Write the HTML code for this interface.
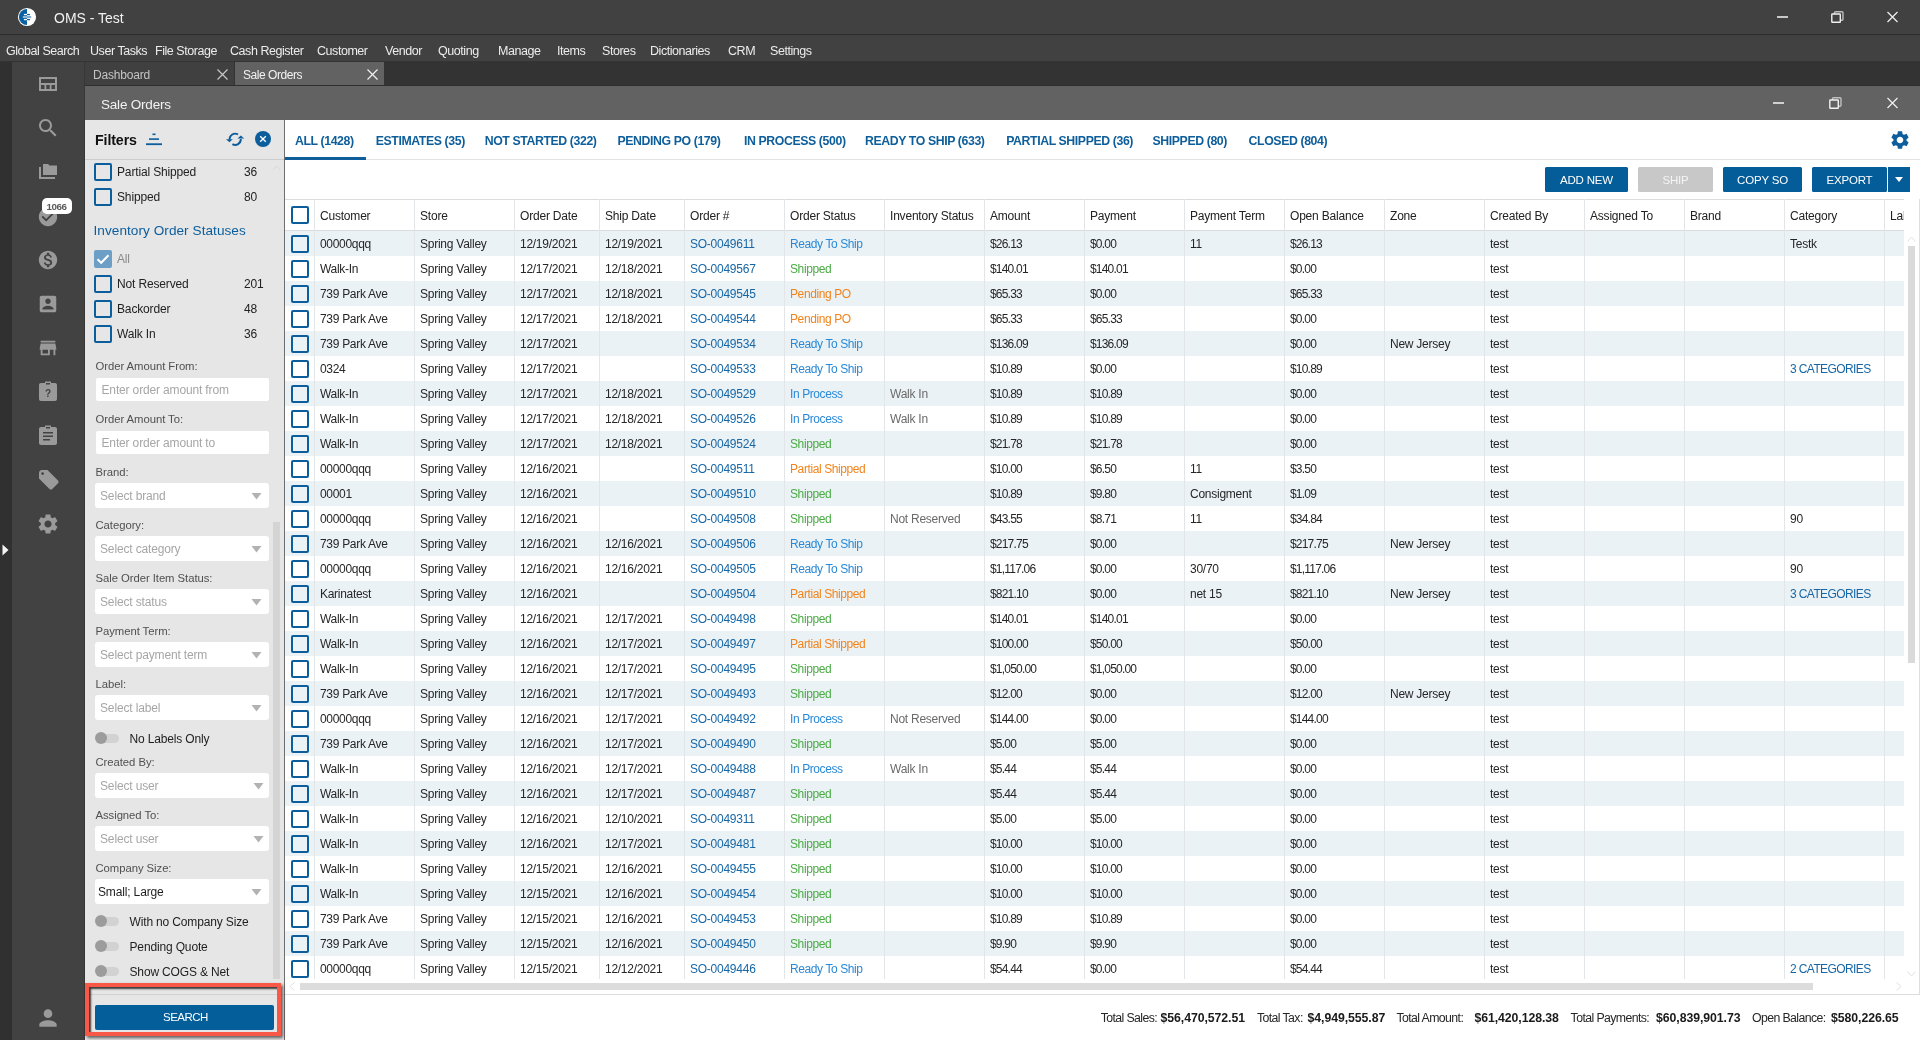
<!DOCTYPE html>
<html><head><meta charset="utf-8"><title>OMS - Test</title>
<style>
html,body{margin:0;padding:0;}
body{width:1920px;height:1040px;position:relative;overflow:hidden;background:#404040;font-family:"Liberation Sans",sans-serif;}
.r{position:absolute;box-sizing:content-box;}
.t{position:absolute;white-space:nowrap;}
.g{display:inline-block;width:11px;}
b{font-weight:bold;}
#wrap{position:absolute;left:0;top:0;width:1920px;height:1040px;overflow:hidden;will-change:transform;}
</style></head><body><div id="wrap">
<div class="r" style="left:0px;top:0px;width:1920px;height:34px;background:#414141;"></div>
<div class="r" style="left:0px;top:34px;width:1920px;height:1px;background:#2c2c2c;"></div>
<div class="r" style="left:0px;top:35px;width:1920px;height:27px;background:#414141;"></div>
<div class="r" style="left:0px;top:61px;width:1920px;height:1px;background:#343434;"></div>
<div class="r" style="left:0px;top:62px;width:12px;height:978px;background:#303030;"></div>
<div class="r" style="left:12px;top:62px;width:73px;height:978px;background:#424242;"></div>
<div class="r" style="left:84px;top:62px;width:1px;height:978px;background:#363636;"></div>
<div class="r" style="left:85px;top:62px;width:1835px;height:24px;background:#333333;"></div>
<div class="r" style="left:85px;top:62px;width:149px;height:23px;background:#404040;"></div>
<div class="r" style="left:235px;top:62px;width:149px;height:23px;background:#626262;"></div>
<div class="r" style="left:85px;top:85px;width:1835px;height:1px;background:#2e2e2e;"></div>
<div class="r" style="left:85px;top:86px;width:1835px;height:34px;background:#626262;"></div>
<div class="r" style="left:85px;top:120px;width:199px;height:920px;background:#e6e6e6;"></div>
<div class="r" style="left:284px;top:120px;width:1px;height:920px;background:#6e6e6e;"></div>
<div class="r" style="left:285px;top:120px;width:1635px;height:920px;background:#ffffff;"></div>
<svg class="r" style="left:17px;top:7px" width="20" height="20" viewBox="0 0 20 20">
<circle cx="10" cy="10" r="9.1" fill="#fff"/>
<path d="M10 1.9 A8.1 8.1 0 0 0 10 18.1 Z" fill="#0a60a0"/>
<rect x="6.9" y="6.9" width="3.1" height="1.3" fill="#fff"/><rect x="10" y="6.9" width="3" height="1.3" fill="#0a60a0"/>
<rect x="5.9" y="9.3" width="4.1" height="1.4" fill="#cfe0ec"/><rect x="10" y="9.3" width="4.2" height="1.4" fill="#4f8cbc"/>
<rect x="6.9" y="11.9" width="3.1" height="1.3" fill="#fff"/><rect x="10" y="11.9" width="3" height="1.3" fill="#0a60a0"/>
</svg>
<div class="t " style="left:54px;top:11.15px;font-size:14px;line-height:14px;color:#f2f2f2;">OMS - Test</div>
<div class="r" style="left:1777px;top:16px;width:11px;height:2px;background:#c8c8c8;"></div>
<svg class="r" style="left:1831px;top:11px" width="13" height="12" viewBox="0 0 13 12"><rect x="3.5" y="0.8" width="8.5" height="8.5" rx="1" fill="none" stroke="#bdbdbd" stroke-width="1.4"/><rect x="0.8" y="3" width="8.5" height="8.3" rx="0.5" fill="#414141" stroke="#f0f0f0" stroke-width="1.4"/></svg>
<svg class="r" style="left:1887px;top:11px" width="11" height="12" viewBox="0 0 11 12"><path d="M0.5 1 L10.5 11 M10.5 1 L0.5 11" stroke="#f0f0f0" stroke-width="1.2"/></svg>
<div class="t " style="left:6px;top:45.42px;font-size:12.5px;line-height:12.5px;color:#ececec;letter-spacing:-0.45px;">Global Search</div>
<div class="t " style="left:90px;top:45.42px;font-size:12.5px;line-height:12.5px;color:#ececec;letter-spacing:-0.45px;">User Tasks</div>
<div class="t " style="left:155px;top:45.42px;font-size:12.5px;line-height:12.5px;color:#ececec;letter-spacing:-0.45px;">File Storage</div>
<div class="t " style="left:230px;top:45.42px;font-size:12.5px;line-height:12.5px;color:#ececec;letter-spacing:-0.45px;">Cash Register</div>
<div class="t " style="left:317px;top:45.42px;font-size:12.5px;line-height:12.5px;color:#ececec;letter-spacing:-0.45px;">Customer</div>
<div class="t " style="left:385px;top:45.42px;font-size:12.5px;line-height:12.5px;color:#ececec;letter-spacing:-0.45px;">Vendor</div>
<div class="t " style="left:438px;top:45.42px;font-size:12.5px;line-height:12.5px;color:#ececec;letter-spacing:-0.45px;">Quoting</div>
<div class="t " style="left:498px;top:45.42px;font-size:12.5px;line-height:12.5px;color:#ececec;letter-spacing:-0.45px;">Manage</div>
<div class="t " style="left:557px;top:45.42px;font-size:12.5px;line-height:12.5px;color:#ececec;letter-spacing:-0.45px;">Items</div>
<div class="t " style="left:602px;top:45.42px;font-size:12.5px;line-height:12.5px;color:#ececec;letter-spacing:-0.45px;">Stores</div>
<div class="t " style="left:650px;top:45.42px;font-size:12.5px;line-height:12.5px;color:#ececec;letter-spacing:-0.45px;">Dictionaries</div>
<div class="t " style="left:728px;top:45.42px;font-size:12.5px;line-height:12.5px;color:#ececec;letter-spacing:-0.45px;">CRM</div>
<div class="t " style="left:770px;top:45.42px;font-size:12.5px;line-height:12.5px;color:#ececec;letter-spacing:-0.45px;">Settings</div>
<div class="t " style="left:93px;top:68.84px;font-size:12px;line-height:12px;color:#c4c4c4;letter-spacing:-0.2px;">Dashboard</div>
<div class="t " style="left:243px;top:68.84px;font-size:12px;line-height:12px;color:#f2f2f2;letter-spacing:-0.45px;">Sale Orders</div>
<svg class="r" style="left:217px;top:69px" width="11" height="11" viewBox="0 0 11 11"><path d="M0.5 0.5 L10.5 10.5 M10.5 0.5 L0.5 10.5" stroke="#c8c8c8" stroke-width="1.2"/></svg>
<svg class="r" style="left:367px;top:69px" width="11" height="11" viewBox="0 0 11 11"><path d="M0.5 0.5 L10.5 10.5 M10.5 0.5 L0.5 10.5" stroke="#f0f0f0" stroke-width="1.2"/></svg>
<div class="t " style="left:101px;top:97.57px;font-size:13.5px;line-height:13.5px;color:#f2f2f2;letter-spacing:-0.2px;">Sale Orders</div>
<div class="r" style="left:1773px;top:102px;width:11px;height:2px;background:#d0d0d0;"></div>
<svg class="r" style="left:1829px;top:97px" width="13" height="12" viewBox="0 0 13 12"><rect x="3.5" y="0.8" width="8.5" height="8.5" rx="1" fill="none" stroke="#c0c0c0" stroke-width="1.4"/><rect x="0.8" y="3" width="8.5" height="8.3" rx="0.5" fill="#626262" stroke="#f0f0f0" stroke-width="1.4"/></svg>
<svg class="r" style="left:1887px;top:97px" width="11" height="12" viewBox="0 0 11 12"><path d="M0.5 1 L10.5 11 M10.5 1 L0.5 11" stroke="#f0f0f0" stroke-width="1.2"/></svg>
<svg class="r" style="left:39px;top:77px" width="18" height="14" viewBox="0 0 18 14"><path d="M0 0H18V14H0Z M2 2V6H16V2Z M2 8V12H5.5V8Z M7.3 8V12H10.7V8Z M12.5 8V12H16V8Z" fill="#9a9a9a" fill-rule="evenodd"/></svg>
<svg class="r" style="left:36.0px;top:116.0px" width="24" height="24" viewBox="0 0 24 24"><path d="M15.5 14h-.79l-.28-.27C15.41 12.59 16 11.11 16 9.5 16 5.91 13.09 3 9.5 3S3 5.91 3 9.5 5.91 16 9.5 16c1.61 0 3.09-.59 4.23-1.57l.27.28v.79l5 4.99L20.49 19l-4.99-5zm-6 0C7.01 14 5 11.99 5 9.5S7.01 5 9.5 5 14 7.01 14 9.5 11.99 14 9.5 14z" fill="#9a9a9a"/></svg>
<svg class="r" style="left:39px;top:164px" width="18" height="15" viewBox="0 0 18 15"><path d="M4 0H9L10.5 1.5H18V11H4Z" fill="#9a9a9a"/><path d="M0 3H2V13H16V15H0Z" fill="#9a9a9a"/></svg>
<svg class="r" style="left:37.0px;top:206.0px" width="22" height="22" viewBox="0 0 24 24"><path d="M12 2C6.48 2 2 6.48 2 12s4.48 10 10 10 10-4.48 10-10S17.52 2 12 2zm-2 15l-5-5 1.41-1.41L10 14.17l7.59-7.59L19 8l-9 9z" fill="#9a9a9a"/></svg>
<div class="r" style="left:42px;top:198px;width:30px;height:16px;background:#fff;border-radius:5px;"></div>
<div class="t " style="left:46.5px;top:201.70px;font-size:9.8px;line-height:9.8px;color:#5a5a5a;font-weight:bold;letter-spacing:-0.45px;">1066</div>
<svg class="r" style="left:37.0px;top:249.0px" width="22" height="22" viewBox="0 0 24 24"><path d="M12 2C6.48 2 2 6.48 2 12s4.48 10 10 10 10-4.48 10-10S17.52 2 12 2zm1.41 16.09V20h-2.67v-1.93c-1.71-.36-3.160-1.46-3.27-3.4h1.96c.1 1.05.82 1.870 2.65 1.870 1.96 0 2.4-.98 2.4-1.59 0-.83-.44-1.61-2.67-2.14-2.48-.6-4.18-1.62-4.18-3.67 0-1.72 1.39-2.84 3.11-3.21V4h2.67v1.95c1.86.45 2.79 1.86 2.85 3.39H14.3c-.05-1.11-.64-1.87-2.22-1.87-1.5 0-2.4.68-2.4 1.64 0 .84.65 1.39 2.67 1.91s4.18 1.39 4.18 3.910c-.01 1.83-1.38 2.83-3.12 3.16z" fill="#9a9a9a"/></svg>
<svg class="r" style="left:37.0px;top:293.0px" width="22" height="22" viewBox="0 0 24 24"><path d="M3 5v14c0 1.1.89 2 2 2h14c1.1 0 2-.9 2-2V5c0-1.1-.9-2-2-2H5c-1.11 0-2 .9-2 2zm12 4c0 1.66-1.34 3-3 3s-3-1.34-3-3 1.34-3 3-3 3 1.34 3 3zm-9 8c0-2 4-3.1 6-3.1s6 1.1 6 3.1v1H6v-1z" fill="#9a9a9a"/></svg>
<svg class="r" style="left:37.0px;top:337.0px" width="22" height="22" viewBox="0 0 24 24"><path d="M20 4H4v2h16V4zm1 10v-2l-1-5H4l-1 5v2h1v6h10v-6h4v6h2v-6h1zm-9 4H6v-4h6v4z" fill="#9a9a9a"/></svg>
<svg class="r" style="left:39px;top:381px" width="18" height="20" viewBox="0 0 18 20"><path d="M2 2H6V0.5H12V2H16C17.1 2 18 2.9 18 4V18C18 19.1 17.1 20 16 20H2C0.9 20 0 19.1 0 18V4C0 2.9 0.9 2 2 2Z M7 3.5H11V2H7Z" fill="#9a9a9a" fill-rule="evenodd"/><text x="9" y="15.5" font-size="10" font-weight="bold" text-anchor="middle" fill="#404040" font-family="Liberation Sans">?</text></svg>
<svg class="r" style="left:39px;top:425px" width="18" height="20" viewBox="0 0 18 20"><path d="M2 2H6V0.5H12V2H16C17.1 2 18 2.9 18 4V18C18 19.1 17.1 20 16 20H2C0.9 20 0 19.1 0 18V4C0 2.9 0.9 2 2 2Z M7 3.5H11V2H7Z M4 7H14V8.6H4Z M4 10.5H14V12.1H4Z M4 14H11V15.6H4Z" fill="#9a9a9a" fill-rule="evenodd"/></svg>
<svg class="r" style="left:38px;top:469px" width="21" height="21" viewBox="0 0 21 21"><path d="M1 4C1 2.3 2.3 1 4 1H9.5L20 11.5C20.8 12.3 20.8 13.5 20 14.3L14.3 20C13.5 20.8 12.3 20.8 11.5 20L1 9.5Z" fill="#9a9a9a"/><circle cx="4.6" cy="4.6" r="1.3" fill="#404040"/></svg>
<svg class="r" style="left:36.0px;top:512.0px" width="24" height="24" viewBox="0 0 24 24"><path d="M19.14 12.94c.04-.3.06-.61.06-.94 0-.32-.02-.64-.07-.94l2.03-1.58c.18-.14.23-.41.12-.61l-1.92-3.32c-.12-.22-.37-.29-.59-.22l-2.39.96c-.5-.38-1.03-.7-1.62-.94l-.36-2.54c-.04-.24-.24-.41-.48-.41h-3.84c-.24 0-.43.17-.47.41l-.36 2.540c-.59.24-1.13.57-1.62.94l-2.39-.96c-.22-.08-.47 0-.59.22L2.74 8.87c-.12.21-.08.47.12.61l2.03 1.58c-.05.3-.09.63-.09.94s.02.64.07.94l-2.03 1.58c-.18.14-.23.41-.12.61l1.92 3.32c.12.22.37.29.59.22l2.39-.96c.5.38 1.03.7 1.62.94l.36 2.54c.05.24.24.41.48.41h3.84c.24 0 .44-.17.47-.41l.36-2.54c.59-.24 1.13-.56 1.62-.94l2.39.96c.22.08.47 0 .59-.22l1.92-3.32c.12-.22.07-.47-.12-.61l-2.01-1.58zM12 15.6c-1.98 0-3.6-1.620-3.6-3.6s1.62-3.6 3.6-3.6 3.6 1.62 3.6 3.6-1.62 3.6-3.6 3.6z" fill="#9a9a9a"/></svg>
<svg class="r" style="left:35.0px;top:1005.0px" width="26" height="26" viewBox="0 0 24 24"><path d="M12 12c2.21 0 4-1.79 4-4s-1.79-4-4-4-4 1.79-4 4 1.79 4 4 4zm0 2c-2.67 0-8 1.34-8 4v2h16v-2c0-2.66-5.33-4-8-4z" fill="#9a9a9a"/></svg>
<svg class="r" style="left:2px;top:544px" width="7" height="12" viewBox="0 0 7 12"><path d="M0.5 0.5 L6.5 6 L0.5 11.5Z" fill="#f4f4f4"/></svg>
<div class="t " style="left:95px;top:132.98px;font-size:14.2px;line-height:14.2px;color:#111;font-weight:bold;letter-spacing:-0.1px;">Filters</div>
<svg class="r" style="left:146px;top:133px" width="16" height="13" viewBox="0 0 16 13"><rect x="6.5" y="0.5" width="3" height="1.6" fill="#0b5d9c"/><rect x="3" y="5.3" width="10" height="1.6" fill="#0b5d9c"/><rect x="0" y="10.3" width="16" height="1.8" fill="#0b5d9c"/></svg>
<svg class="r" style="left:225px;top:131px" width="20" height="17" viewBox="0 0 20 17">
<path d="M13.0 3.45 A5.6 5.6 0 0 0 4.6 8.6" fill="none" stroke="#0b5d9c" stroke-width="1.9"/>
<path d="M7.4 13.15 A5.6 5.6 0 0 0 15.8 8.0" fill="none" stroke="#0b5d9c" stroke-width="1.9"/>
<path d="M1.0 8.3 L7.8 8.3 L4.4 11.3Z" fill="#0b5d9c"/>
<path d="M12.4 7.4 L19.2 7.4 L15.8 4.6Z" fill="#0b5d9c"/>
</svg>
<svg class="r" style="left:255px;top:131px" width="16" height="16" viewBox="0 0 16 16"><circle cx="8" cy="8" r="8" fill="#0b5d9c"/><path d="M5.2 5.2 L10.8 10.8 M10.8 5.2 L5.2 10.8" stroke="#fff" stroke-width="1.35"/></svg>
<div class="r" style="left:85px;top:159px;width:199px;height:1px;background:#cdcdcd;"></div>
<div class="r" style="left:94px;top:163px;width:14px;height:14px;border:2px solid #0b5d9c;border-radius:2px;background:none;"></div>
<div class="t " style="left:117px;top:165.84px;font-size:12px;line-height:12px;color:#222;letter-spacing:-0.15px;">Partial Shipped</div>
<div class="t " style="left:244px;top:165.84px;font-size:12px;line-height:12px;color:#222;letter-spacing:-0.15px;">36</div>
<div class="r" style="left:94px;top:188px;width:14px;height:14px;border:2px solid #0b5d9c;border-radius:2px;background:none;"></div>
<div class="t " style="left:117px;top:190.84px;font-size:12px;line-height:12px;color:#222;letter-spacing:-0.15px;">Shipped</div>
<div class="t " style="left:244px;top:190.84px;font-size:12px;line-height:12px;color:#222;letter-spacing:-0.15px;">80</div>
<svg class="r" style="left:272px;top:165px" width="9" height="6" viewBox="0 0 9 6"><path d="M0.5 5.5 L4.5 1 L8.5 5.5" fill="none" stroke="#d8d8d8" stroke-width="1"/></svg>
<div class="t " style="left:93.5px;top:224.29px;font-size:13.6px;line-height:13.6px;color:#0b5d9c;letter-spacing:0.05px;">Inventory Order Statuses</div>
<div class="r" style="left:94px;top:250px;width:18px;height:18px;background:#6d9fc6;border-radius:2px;"></div>
<svg class="r" style="left:94px;top:250px" width="18" height="18" viewBox="0 0 18 18"><path d="M3.5 9.2 L7.2 12.8 L14.5 5.2" fill="none" stroke="#fff" stroke-width="2"/></svg>
<div class="t " style="left:117px;top:252.84px;font-size:12px;line-height:12px;color:#8a8a8a;letter-spacing:-0.15px;">All</div>
<div class="r" style="left:94px;top:275px;width:14px;height:14px;border:2px solid #0b5d9c;border-radius:2px;background:none;"></div>
<div class="t " style="left:117px;top:277.84px;font-size:12px;line-height:12px;color:#222;letter-spacing:-0.15px;">Not Reserved</div>
<div class="t " style="left:244px;top:277.84px;font-size:12px;line-height:12px;color:#222;letter-spacing:-0.15px;">201</div>
<div class="r" style="left:94px;top:300px;width:14px;height:14px;border:2px solid #0b5d9c;border-radius:2px;background:none;"></div>
<div class="t " style="left:117px;top:302.84px;font-size:12px;line-height:12px;color:#222;letter-spacing:-0.15px;">Backorder</div>
<div class="t " style="left:244px;top:302.84px;font-size:12px;line-height:12px;color:#222;letter-spacing:-0.15px;">48</div>
<div class="r" style="left:94px;top:325px;width:14px;height:14px;border:2px solid #0b5d9c;border-radius:2px;background:none;"></div>
<div class="t " style="left:117px;top:327.84px;font-size:12px;line-height:12px;color:#222;letter-spacing:-0.15px;">Walk In</div>
<div class="t " style="left:244px;top:327.84px;font-size:12px;line-height:12px;color:#222;letter-spacing:-0.15px;">36</div>
<div class="t " style="left:95.5px;top:361.43px;font-size:11.3px;line-height:11.3px;color:#505050;letter-spacing:-0.05px;">Order Amount From:</div>
<div class="r" style="left:95.5px;top:378px;width:173px;height:23px;background:#fff;border-radius:2px;"></div>
<div class="t " style="left:101.5px;top:383.84px;font-size:12px;line-height:12px;color:#a6a6a6;letter-spacing:-0.15px;">Enter order amount from</div>
<div class="t " style="left:95.5px;top:414.43px;font-size:11.3px;line-height:11.3px;color:#505050;letter-spacing:-0.05px;">Order Amount To:</div>
<div class="r" style="left:95.5px;top:431px;width:173px;height:23px;background:#fff;border-radius:2px;"></div>
<div class="t " style="left:101.5px;top:436.84px;font-size:12px;line-height:12px;color:#a6a6a6;letter-spacing:-0.15px;">Enter order amount to</div>
<div class="t " style="left:95.5px;top:467.43px;font-size:11.3px;line-height:11.3px;color:#505050;letter-spacing:-0.05px;">Brand:</div>
<div class="r" style="left:95px;top:483px;width:174px;height:25px;background:#fff;border-radius:3px;"></div>
<div class="t " style="left:100px;top:490.34px;font-size:12px;line-height:12px;color:#a6a6a6;letter-spacing:-0.15px;">Select brand</div>
<svg class="r" style="left:251px;top:493px" width="11" height="7" viewBox="0 0 11 7"><path d="M0.5 0 H10.5 L5.5 6.5Z" fill="#b2b2b2"/></svg>
<div class="t " style="left:95.5px;top:520.43px;font-size:11.3px;line-height:11.3px;color:#505050;letter-spacing:-0.05px;">Category:</div>
<div class="r" style="left:95px;top:536px;width:174px;height:25px;background:#fff;border-radius:3px;"></div>
<div class="t " style="left:100px;top:543.34px;font-size:12px;line-height:12px;color:#a6a6a6;letter-spacing:-0.15px;">Select category</div>
<svg class="r" style="left:251px;top:546px" width="11" height="7" viewBox="0 0 11 7"><path d="M0.5 0 H10.5 L5.5 6.5Z" fill="#b2b2b2"/></svg>
<div class="t " style="left:95.5px;top:573.43px;font-size:11.3px;line-height:11.3px;color:#505050;letter-spacing:-0.05px;">Sale Order Item Status:</div>
<div class="r" style="left:95px;top:589px;width:174px;height:25px;background:#fff;border-radius:3px;"></div>
<div class="t " style="left:100px;top:596.34px;font-size:12px;line-height:12px;color:#a6a6a6;letter-spacing:-0.15px;">Select status</div>
<svg class="r" style="left:251px;top:599px" width="11" height="7" viewBox="0 0 11 7"><path d="M0.5 0 H10.5 L5.5 6.5Z" fill="#b2b2b2"/></svg>
<div class="t " style="left:95.5px;top:626.43px;font-size:11.3px;line-height:11.3px;color:#505050;letter-spacing:-0.05px;">Payment Term:</div>
<div class="r" style="left:95px;top:642px;width:174px;height:25px;background:#fff;border-radius:3px;"></div>
<div class="t " style="left:100px;top:649.34px;font-size:12px;line-height:12px;color:#a6a6a6;letter-spacing:-0.15px;">Select payment term</div>
<svg class="r" style="left:251px;top:652px" width="11" height="7" viewBox="0 0 11 7"><path d="M0.5 0 H10.5 L5.5 6.5Z" fill="#b2b2b2"/></svg>
<div class="t " style="left:95.5px;top:679.43px;font-size:11.3px;line-height:11.3px;color:#505050;letter-spacing:-0.05px;">Label:</div>
<div class="r" style="left:95px;top:695px;width:174px;height:25px;background:#fff;border-radius:3px;"></div>
<div class="t " style="left:100px;top:702.34px;font-size:12px;line-height:12px;color:#a6a6a6;letter-spacing:-0.15px;">Select label</div>
<svg class="r" style="left:251px;top:705px" width="11" height="7" viewBox="0 0 11 7"><path d="M0.5 0 H10.5 L5.5 6.5Z" fill="#b2b2b2"/></svg>
<div class="r" style="left:97px;top:734px;width:22px;height:9px;background:#d2d2d2;border-radius:4.5px;"></div>
<div class="r" style="left:95px;top:732px;width:12px;height:12px;background:#9c9c9c;border-radius:50%;"></div>
<div class="t " style="left:129.5px;top:732.84px;font-size:12px;line-height:12px;color:#1e1e1e;letter-spacing:-0.15px;">No Labels Only</div>
<div class="t " style="left:95.5px;top:757.43px;font-size:11.3px;line-height:11.3px;color:#505050;letter-spacing:-0.05px;">Created By:</div>
<div class="r" style="left:95px;top:773px;width:174px;height:25px;background:#fff;border-radius:3px;"></div>
<div class="t " style="left:100px;top:780.34px;font-size:12px;line-height:12px;color:#a6a6a6;letter-spacing:-0.15px;">Select user</div>
<svg class="r" style="left:253px;top:783px" width="11" height="7" viewBox="0 0 11 7"><path d="M0.5 0 H10.5 L5.5 6.5Z" fill="#b2b2b2"/></svg>
<div class="t " style="left:95.5px;top:810.43px;font-size:11.3px;line-height:11.3px;color:#505050;letter-spacing:-0.05px;">Assigned To:</div>
<div class="r" style="left:95px;top:826px;width:174px;height:25px;background:#fff;border-radius:3px;"></div>
<div class="t " style="left:100px;top:833.34px;font-size:12px;line-height:12px;color:#a6a6a6;letter-spacing:-0.15px;">Select user</div>
<svg class="r" style="left:253px;top:836px" width="11" height="7" viewBox="0 0 11 7"><path d="M0.5 0 H10.5 L5.5 6.5Z" fill="#b2b2b2"/></svg>
<div class="t " style="left:95.5px;top:863.43px;font-size:11.3px;line-height:11.3px;color:#505050;letter-spacing:-0.05px;">Company Size:</div>
<div class="r" style="left:95px;top:879px;width:174px;height:25px;background:#fff;border-radius:3px;"></div>
<div class="t " style="left:98px;top:886.34px;font-size:12px;line-height:12px;color:#1e1e1e;letter-spacing:-0.15px;">Small; Large</div>
<svg class="r" style="left:251px;top:889px" width="11" height="7" viewBox="0 0 11 7"><path d="M0.5 0 H10.5 L5.5 6.5Z" fill="#b2b2b2"/></svg>
<div class="r" style="left:97px;top:917px;width:22px;height:9px;background:#d2d2d2;border-radius:4.5px;"></div>
<div class="r" style="left:95px;top:915px;width:12px;height:12px;background:#9c9c9c;border-radius:50%;"></div>
<div class="t " style="left:129.5px;top:915.84px;font-size:12px;line-height:12px;color:#1e1e1e;letter-spacing:-0.15px;">With no Company Size</div>
<div class="r" style="left:97px;top:942px;width:22px;height:9px;background:#d2d2d2;border-radius:4.5px;"></div>
<div class="r" style="left:95px;top:940px;width:12px;height:12px;background:#9c9c9c;border-radius:50%;"></div>
<div class="t " style="left:129.5px;top:940.84px;font-size:12px;line-height:12px;color:#1e1e1e;letter-spacing:-0.15px;">Pending Quote</div>
<div class="r" style="left:97px;top:967px;width:22px;height:9px;background:#d2d2d2;border-radius:4.5px;"></div>
<div class="r" style="left:95px;top:965px;width:12px;height:12px;background:#9c9c9c;border-radius:50%;"></div>
<div class="t " style="left:129.5px;top:965.84px;font-size:12px;line-height:12px;color:#1e1e1e;letter-spacing:-0.15px;">Show COGS &amp; Net</div>
<div class="r" style="left:273px;top:522px;width:7px;height:457px;background:#d4d4d4;"></div>
<div class="r" style="left:85px;top:994px;width:199px;height:1px;background:#d2d2d2;"></div>
<div class="r" style="left:95px;top:1005px;width:179px;height:25px;background:#035e9a;border-radius:2px;"></div>
<div class="t " style="left:163px;top:1012.27px;font-size:11.5px;line-height:11.5px;color:#ffffff;letter-spacing:-0.5px;">SEARCH</div>
<div class="r" style="left:85px;top:983px;width:188px;height:45px;border:4px solid #fa5846;box-shadow: inset 2px 2px 2px rgba(0,0,0,0.75), 2px 2px 3px rgba(0,0,0,0.6);"></div>
<div class="t " style="left:295px;top:135.09px;font-size:12.3px;line-height:12.3px;color:#0d5e9b;font-weight:bold;letter-spacing:-0.4px;">ALL (1428)</div>
<div class="t " style="left:375.7px;top:135.09px;font-size:12.3px;line-height:12.3px;color:#0d5e9b;font-weight:bold;letter-spacing:-0.4px;">ESTIMATES (35)</div>
<div class="t " style="left:484.7px;top:135.09px;font-size:12.3px;line-height:12.3px;color:#0d5e9b;font-weight:bold;letter-spacing:-0.4px;">NOT STARTED (322)</div>
<div class="t " style="left:617.5px;top:135.09px;font-size:12.3px;line-height:12.3px;color:#0d5e9b;font-weight:bold;letter-spacing:-0.4px;">PENDING PO (179)</div>
<div class="t " style="left:744px;top:135.09px;font-size:12.3px;line-height:12.3px;color:#0d5e9b;font-weight:bold;letter-spacing:-0.4px;">IN PROCESS (500)</div>
<div class="t " style="left:865px;top:135.09px;font-size:12.3px;line-height:12.3px;color:#0d5e9b;font-weight:bold;letter-spacing:-0.4px;">READY TO SHIP (633)</div>
<div class="t " style="left:1006.2px;top:135.09px;font-size:12.3px;line-height:12.3px;color:#0d5e9b;font-weight:bold;letter-spacing:-0.4px;">PARTIAL SHIPPED (36)</div>
<div class="t " style="left:1152.5px;top:135.09px;font-size:12.3px;line-height:12.3px;color:#0d5e9b;font-weight:bold;letter-spacing:-0.4px;">SHIPPED (80)</div>
<div class="t " style="left:1248.6px;top:135.09px;font-size:12.3px;line-height:12.3px;color:#0d5e9b;font-weight:bold;letter-spacing:-0.4px;">CLOSED (804)</div>
<div class="r" style="left:285px;top:159px;width:1635px;height:1px;background:#e3e3e3;"></div>
<div class="r" style="left:285px;top:157px;width:81px;height:3px;background:#0f5e9c;"></div>
<svg class="r" style="left:1889.0px;top:128.5px" width="22" height="22" viewBox="0 0 24 24"><path d="M19.14 12.94c.04-.3.06-.61.06-.94 0-.32-.02-.64-.07-.94l2.03-1.58c.18-.14.23-.41.12-.61l-1.92-3.32c-.12-.22-.37-.29-.59-.22l-2.39.96c-.5-.38-1.03-.7-1.62-.94l-.36-2.54c-.04-.24-.24-.41-.48-.41h-3.84c-.24 0-.43.17-.47.41l-.36 2.54c-.59.24-1.13.57-1.62.94l-2.39-.96c-.22-.08-.47 0-.59.22L2.74 8.87c-.12.21-.08.47.12.61l2.03 1.58c-.05.3-.09.63-.09.94s.02.64.07.94l-2.03 1.58c-.18.14-.23.41-.12.61l1.92 3.32c.12.22.37.29.59.22l2.39-.96c.5.38 1.03.7 1.62.94l.36 2.54c.05.24.24.41.48.41h3.84c.24 0 .44-.17.47-.41l.36-2.54c.59-.24 1.13-.56 1.62-.94l2.39.96c.22.08.47 0 .59-.22l1.92-3.32c.12-.22.07-.47-.12-.61l-2.01-1.58zM12 15.6c-1.98 0-3.6-1.62-3.6-3.6s1.62-3.6 3.6-3.6 3.6 1.62 3.6 3.6-1.62 3.6-3.6 3.6z" fill="#0f5e9c"/></svg>
<div class="r" style="left:1545px;top:167px;width:83px;height:25px;background:#045c98;border-radius:1.5px;"></div>
<div class="t" style="left:1545px;top:168px;width:83px;height:25px;line-height:25px;text-align:center;font-size:11.5px;color:#fff;letter-spacing:-0.2px;">ADD NEW</div>
<div class="r" style="left:1638px;top:167px;width:75px;height:25px;background:#c8c8c8;border-radius:1.5px;"></div>
<div class="t" style="left:1638px;top:168px;width:75px;height:25px;line-height:25px;text-align:center;font-size:11.5px;color:#f4f4f4;letter-spacing:-0.2px;">SHIP</div>
<div class="r" style="left:1723px;top:167px;width:79px;height:25px;background:#045c98;border-radius:1.5px;"></div>
<div class="t" style="left:1723px;top:168px;width:79px;height:25px;line-height:25px;text-align:center;font-size:11.5px;color:#fff;letter-spacing:-0.2px;">COPY SO</div>
<div class="r" style="left:1812px;top:167px;width:75px;height:25px;background:#045c98;border-radius:1.5px;"></div>
<div class="t" style="left:1812px;top:168px;width:75px;height:25px;line-height:25px;text-align:center;font-size:11.5px;color:#fff;letter-spacing:-0.2px;">EXPORT</div>
<div class="r" style="left:1888px;top:167px;width:22px;height:25px;background:#045c98;"></div>
<svg class="r" style="left:1895px;top:177px" width="8" height="5" viewBox="0 0 8 5"><path d="M0 0H8L4 5Z" fill="#fff"/></svg>
<div class="r" style="left:285px;top:199px;width:1619px;height:781px;overflow:hidden;">
<div class="r" style="left:0px;top:0px;width:1619px;height:1px;background:#dcdcdc;"></div>
<div class="r" style="left:0px;top:31px;width:1619px;height:1px;background:#dcdcdc;"></div>
<div class="r" style="left:0px;top:32px;width:1619px;height:25px;background:#ebf2f6;"></div>
<div class="r" style="left:0px;top:82px;width:1619px;height:25px;background:#ebf2f6;"></div>
<div class="r" style="left:0px;top:132px;width:1619px;height:25px;background:#ebf2f6;"></div>
<div class="r" style="left:0px;top:182px;width:1619px;height:25px;background:#ebf2f6;"></div>
<div class="r" style="left:0px;top:232px;width:1619px;height:25px;background:#ebf2f6;"></div>
<div class="r" style="left:0px;top:282px;width:1619px;height:25px;background:#ebf2f6;"></div>
<div class="r" style="left:0px;top:332px;width:1619px;height:25px;background:#ebf2f6;"></div>
<div class="r" style="left:0px;top:382px;width:1619px;height:25px;background:#ebf2f6;"></div>
<div class="r" style="left:0px;top:432px;width:1619px;height:25px;background:#ebf2f6;"></div>
<div class="r" style="left:0px;top:482px;width:1619px;height:25px;background:#ebf2f6;"></div>
<div class="r" style="left:0px;top:532px;width:1619px;height:25px;background:#ebf2f6;"></div>
<div class="r" style="left:0px;top:582px;width:1619px;height:25px;background:#ebf2f6;"></div>
<div class="r" style="left:0px;top:632px;width:1619px;height:25px;background:#ebf2f6;"></div>
<div class="r" style="left:0px;top:682px;width:1619px;height:25px;background:#ebf2f6;"></div>
<div class="r" style="left:0px;top:732px;width:1619px;height:25px;background:#ebf2f6;"></div>
<div class="r" style="left:29px;top:0px;width:1px;height:780px;background:#e3e6e8;"></div>
<div class="r" style="left:129px;top:0px;width:1px;height:780px;background:#e3e6e8;"></div>
<div class="r" style="left:229px;top:0px;width:1px;height:780px;background:#e3e6e8;"></div>
<div class="r" style="left:314px;top:0px;width:1px;height:780px;background:#e3e6e8;"></div>
<div class="r" style="left:399px;top:0px;width:1px;height:780px;background:#e3e6e8;"></div>
<div class="r" style="left:499px;top:0px;width:1px;height:780px;background:#e3e6e8;"></div>
<div class="r" style="left:599px;top:0px;width:1px;height:780px;background:#e3e6e8;"></div>
<div class="r" style="left:699px;top:0px;width:1px;height:780px;background:#e3e6e8;"></div>
<div class="r" style="left:799px;top:0px;width:1px;height:780px;background:#e3e6e8;"></div>
<div class="r" style="left:899px;top:0px;width:1px;height:780px;background:#e3e6e8;"></div>
<div class="r" style="left:999px;top:0px;width:1px;height:780px;background:#e3e6e8;"></div>
<div class="r" style="left:1099px;top:0px;width:1px;height:780px;background:#e3e6e8;"></div>
<div class="r" style="left:1199px;top:0px;width:1px;height:780px;background:#e3e6e8;"></div>
<div class="r" style="left:1299px;top:0px;width:1px;height:780px;background:#e3e6e8;"></div>
<div class="r" style="left:1399px;top:0px;width:1px;height:780px;background:#e3e6e8;"></div>
<div class="r" style="left:1499px;top:0px;width:1px;height:780px;background:#e3e6e8;"></div>
<div class="r" style="left:1599px;top:0px;width:1px;height:780px;background:#e3e6e8;"></div>
<div class="r" style="left:6px;top:7px;width:14px;height:14px;border:2px solid #0b5d9c;border-radius:2px;background:none;"></div>
<div class="t " style="left:35px;top:10.84px;font-size:12px;line-height:12px;color:#222;letter-spacing:-0.2px;">Customer</div>
<div class="t " style="left:135px;top:10.84px;font-size:12px;line-height:12px;color:#222;letter-spacing:-0.2px;">Store</div>
<div class="t " style="left:235px;top:10.84px;font-size:12px;line-height:12px;color:#222;letter-spacing:-0.2px;">Order Date</div>
<div class="t " style="left:320px;top:10.84px;font-size:12px;line-height:12px;color:#222;letter-spacing:-0.2px;">Ship Date</div>
<div class="t " style="left:405px;top:10.84px;font-size:12px;line-height:12px;color:#222;letter-spacing:-0.2px;">Order #</div>
<div class="t " style="left:505px;top:10.84px;font-size:12px;line-height:12px;color:#222;letter-spacing:-0.2px;">Order Status</div>
<div class="t " style="left:605px;top:10.84px;font-size:12px;line-height:12px;color:#222;letter-spacing:-0.2px;">Inventory Status</div>
<div class="t " style="left:705px;top:10.84px;font-size:12px;line-height:12px;color:#222;letter-spacing:-0.2px;">Amount</div>
<div class="t " style="left:805px;top:10.84px;font-size:12px;line-height:12px;color:#222;letter-spacing:-0.2px;">Payment</div>
<div class="t " style="left:905px;top:10.84px;font-size:12px;line-height:12px;color:#222;letter-spacing:-0.2px;">Payment Term</div>
<div class="t " style="left:1005px;top:10.84px;font-size:12px;line-height:12px;color:#222;letter-spacing:-0.2px;">Open Balance</div>
<div class="t " style="left:1105px;top:10.84px;font-size:12px;line-height:12px;color:#222;letter-spacing:-0.2px;">Zone</div>
<div class="t " style="left:1205px;top:10.84px;font-size:12px;line-height:12px;color:#222;letter-spacing:-0.2px;">Created By</div>
<div class="t " style="left:1305px;top:10.84px;font-size:12px;line-height:12px;color:#222;letter-spacing:-0.2px;">Assigned To</div>
<div class="t " style="left:1405px;top:10.84px;font-size:12px;line-height:12px;color:#222;letter-spacing:-0.2px;">Brand</div>
<div class="t " style="left:1505px;top:10.84px;font-size:12px;line-height:12px;color:#222;letter-spacing:-0.2px;">Category</div>
<div class="t " style="left:1605px;top:10.84px;font-size:12px;line-height:12px;color:#222;letter-spacing:-0.2px;">Label</div>
<div class="r" style="left:6px;top:36px;width:14px;height:14px;background:none;border:2px solid #0b5d9c;border-radius:2px;"></div>
<div class="t " style="left:35px;top:38.84px;font-size:12px;line-height:12px;color:#262626;letter-spacing:-0.3px;">00000qqq</div>
<div class="t " style="left:135px;top:38.84px;font-size:12px;line-height:12px;color:#262626;letter-spacing:-0.25px;">Spring Valley</div>
<div class="t " style="left:235px;top:38.84px;font-size:12px;line-height:12px;color:#262626;letter-spacing:-0.27px;">12/19/2021</div>
<div class="t " style="left:320px;top:38.84px;font-size:12px;line-height:12px;color:#262626;letter-spacing:-0.27px;">12/19/2021</div>
<div class="t " style="left:405px;top:38.84px;font-size:12px;line-height:12px;color:#1767a6;letter-spacing:-0.25px;">SO-0049611</div>
<div class="t " style="left:505px;top:38.84px;font-size:12px;line-height:12px;color:#2a89d6;letter-spacing:-0.4px;">Ready To Ship</div>
<div class="t " style="left:705px;top:38.84px;font-size:12px;line-height:12px;color:#262626;letter-spacing:-0.8px;">$26.13</div>
<div class="t " style="left:805px;top:38.84px;font-size:12px;line-height:12px;color:#262626;letter-spacing:-0.8px;">$0.00</div>
<div class="t " style="left:905px;top:38.84px;font-size:12px;line-height:12px;color:#262626;letter-spacing:-0.25px;">11</div>
<div class="t " style="left:1005px;top:38.84px;font-size:12px;line-height:12px;color:#262626;letter-spacing:-0.8px;">$26.13</div>
<div class="t " style="left:1205px;top:38.84px;font-size:12px;line-height:12px;color:#262626;letter-spacing:-0.25px;">test</div>
<div class="t " style="left:1505px;top:38.84px;font-size:12px;line-height:12px;color:#262626;letter-spacing:-0.25px;">Testk</div>
<div class="r" style="left:6px;top:61px;width:14px;height:14px;background:none;border:2px solid #0b5d9c;border-radius:2px;"></div>
<div class="t " style="left:35px;top:63.84px;font-size:12px;line-height:12px;color:#262626;letter-spacing:-0.3px;">Walk-In</div>
<div class="t " style="left:135px;top:63.84px;font-size:12px;line-height:12px;color:#262626;letter-spacing:-0.25px;">Spring Valley</div>
<div class="t " style="left:235px;top:63.84px;font-size:12px;line-height:12px;color:#262626;letter-spacing:-0.27px;">12/17/2021</div>
<div class="t " style="left:320px;top:63.84px;font-size:12px;line-height:12px;color:#262626;letter-spacing:-0.27px;">12/18/2021</div>
<div class="t " style="left:405px;top:63.84px;font-size:12px;line-height:12px;color:#1767a6;letter-spacing:-0.25px;">SO-0049567</div>
<div class="t " style="left:505px;top:63.84px;font-size:12px;line-height:12px;color:#4bab45;letter-spacing:-0.4px;">Shipped</div>
<div class="t " style="left:705px;top:63.84px;font-size:12px;line-height:12px;color:#262626;letter-spacing:-0.8px;">$140.01</div>
<div class="t " style="left:805px;top:63.84px;font-size:12px;line-height:12px;color:#262626;letter-spacing:-0.8px;">$140.01</div>
<div class="t " style="left:1005px;top:63.84px;font-size:12px;line-height:12px;color:#262626;letter-spacing:-0.8px;">$0.00</div>
<div class="t " style="left:1205px;top:63.84px;font-size:12px;line-height:12px;color:#262626;letter-spacing:-0.25px;">test</div>
<div class="r" style="left:6px;top:86px;width:14px;height:14px;background:none;border:2px solid #0b5d9c;border-radius:2px;"></div>
<div class="t " style="left:35px;top:88.84px;font-size:12px;line-height:12px;color:#262626;letter-spacing:-0.3px;">739 Park Ave</div>
<div class="t " style="left:135px;top:88.84px;font-size:12px;line-height:12px;color:#262626;letter-spacing:-0.25px;">Spring Valley</div>
<div class="t " style="left:235px;top:88.84px;font-size:12px;line-height:12px;color:#262626;letter-spacing:-0.27px;">12/17/2021</div>
<div class="t " style="left:320px;top:88.84px;font-size:12px;line-height:12px;color:#262626;letter-spacing:-0.27px;">12/18/2021</div>
<div class="t " style="left:405px;top:88.84px;font-size:12px;line-height:12px;color:#1767a6;letter-spacing:-0.25px;">SO-0049545</div>
<div class="t " style="left:505px;top:88.84px;font-size:12px;line-height:12px;color:#f0841c;letter-spacing:-0.4px;">Pending PO</div>
<div class="t " style="left:705px;top:88.84px;font-size:12px;line-height:12px;color:#262626;letter-spacing:-0.8px;">$65.33</div>
<div class="t " style="left:805px;top:88.84px;font-size:12px;line-height:12px;color:#262626;letter-spacing:-0.8px;">$0.00</div>
<div class="t " style="left:1005px;top:88.84px;font-size:12px;line-height:12px;color:#262626;letter-spacing:-0.8px;">$65.33</div>
<div class="t " style="left:1205px;top:88.84px;font-size:12px;line-height:12px;color:#262626;letter-spacing:-0.25px;">test</div>
<div class="r" style="left:6px;top:111px;width:14px;height:14px;background:none;border:2px solid #0b5d9c;border-radius:2px;"></div>
<div class="t " style="left:35px;top:113.84px;font-size:12px;line-height:12px;color:#262626;letter-spacing:-0.3px;">739 Park Ave</div>
<div class="t " style="left:135px;top:113.84px;font-size:12px;line-height:12px;color:#262626;letter-spacing:-0.25px;">Spring Valley</div>
<div class="t " style="left:235px;top:113.84px;font-size:12px;line-height:12px;color:#262626;letter-spacing:-0.27px;">12/17/2021</div>
<div class="t " style="left:320px;top:113.84px;font-size:12px;line-height:12px;color:#262626;letter-spacing:-0.27px;">12/18/2021</div>
<div class="t " style="left:405px;top:113.84px;font-size:12px;line-height:12px;color:#1767a6;letter-spacing:-0.25px;">SO-0049544</div>
<div class="t " style="left:505px;top:113.84px;font-size:12px;line-height:12px;color:#f0841c;letter-spacing:-0.4px;">Pending PO</div>
<div class="t " style="left:705px;top:113.84px;font-size:12px;line-height:12px;color:#262626;letter-spacing:-0.8px;">$65.33</div>
<div class="t " style="left:805px;top:113.84px;font-size:12px;line-height:12px;color:#262626;letter-spacing:-0.8px;">$65.33</div>
<div class="t " style="left:1005px;top:113.84px;font-size:12px;line-height:12px;color:#262626;letter-spacing:-0.8px;">$0.00</div>
<div class="t " style="left:1205px;top:113.84px;font-size:12px;line-height:12px;color:#262626;letter-spacing:-0.25px;">test</div>
<div class="r" style="left:6px;top:136px;width:14px;height:14px;background:none;border:2px solid #0b5d9c;border-radius:2px;"></div>
<div class="t " style="left:35px;top:138.84px;font-size:12px;line-height:12px;color:#262626;letter-spacing:-0.3px;">739 Park Ave</div>
<div class="t " style="left:135px;top:138.84px;font-size:12px;line-height:12px;color:#262626;letter-spacing:-0.25px;">Spring Valley</div>
<div class="t " style="left:235px;top:138.84px;font-size:12px;line-height:12px;color:#262626;letter-spacing:-0.27px;">12/17/2021</div>
<div class="t " style="left:405px;top:138.84px;font-size:12px;line-height:12px;color:#1767a6;letter-spacing:-0.25px;">SO-0049534</div>
<div class="t " style="left:505px;top:138.84px;font-size:12px;line-height:12px;color:#2a89d6;letter-spacing:-0.4px;">Ready To Ship</div>
<div class="t " style="left:705px;top:138.84px;font-size:12px;line-height:12px;color:#262626;letter-spacing:-0.8px;">$136.09</div>
<div class="t " style="left:805px;top:138.84px;font-size:12px;line-height:12px;color:#262626;letter-spacing:-0.8px;">$136.09</div>
<div class="t " style="left:1005px;top:138.84px;font-size:12px;line-height:12px;color:#262626;letter-spacing:-0.8px;">$0.00</div>
<div class="t " style="left:1105px;top:138.84px;font-size:12px;line-height:12px;color:#262626;letter-spacing:-0.25px;">New Jersey</div>
<div class="t " style="left:1205px;top:138.84px;font-size:12px;line-height:12px;color:#262626;letter-spacing:-0.25px;">test</div>
<div class="r" style="left:6px;top:161px;width:14px;height:14px;background:none;border:2px solid #0b5d9c;border-radius:2px;"></div>
<div class="t " style="left:35px;top:163.84px;font-size:12px;line-height:12px;color:#262626;letter-spacing:-0.3px;">0324</div>
<div class="t " style="left:135px;top:163.84px;font-size:12px;line-height:12px;color:#262626;letter-spacing:-0.25px;">Spring Valley</div>
<div class="t " style="left:235px;top:163.84px;font-size:12px;line-height:12px;color:#262626;letter-spacing:-0.27px;">12/17/2021</div>
<div class="t " style="left:405px;top:163.84px;font-size:12px;line-height:12px;color:#1767a6;letter-spacing:-0.25px;">SO-0049533</div>
<div class="t " style="left:505px;top:163.84px;font-size:12px;line-height:12px;color:#2a89d6;letter-spacing:-0.4px;">Ready To Ship</div>
<div class="t " style="left:705px;top:163.84px;font-size:12px;line-height:12px;color:#262626;letter-spacing:-0.8px;">$10.89</div>
<div class="t " style="left:805px;top:163.84px;font-size:12px;line-height:12px;color:#262626;letter-spacing:-0.8px;">$0.00</div>
<div class="t " style="left:1005px;top:163.84px;font-size:12px;line-height:12px;color:#262626;letter-spacing:-0.8px;">$10.89</div>
<div class="t " style="left:1205px;top:163.84px;font-size:12px;line-height:12px;color:#262626;letter-spacing:-0.25px;">test</div>
<div class="t " style="left:1505px;top:163.84px;font-size:12px;line-height:12px;color:#1767a6;letter-spacing:-0.6px;">3 CATEGORIES</div>
<div class="r" style="left:6px;top:186px;width:14px;height:14px;background:none;border:2px solid #0b5d9c;border-radius:2px;"></div>
<div class="t " style="left:35px;top:188.84px;font-size:12px;line-height:12px;color:#262626;letter-spacing:-0.3px;">Walk-In</div>
<div class="t " style="left:135px;top:188.84px;font-size:12px;line-height:12px;color:#262626;letter-spacing:-0.25px;">Spring Valley</div>
<div class="t " style="left:235px;top:188.84px;font-size:12px;line-height:12px;color:#262626;letter-spacing:-0.27px;">12/17/2021</div>
<div class="t " style="left:320px;top:188.84px;font-size:12px;line-height:12px;color:#262626;letter-spacing:-0.27px;">12/18/2021</div>
<div class="t " style="left:405px;top:188.84px;font-size:12px;line-height:12px;color:#1767a6;letter-spacing:-0.25px;">SO-0049529</div>
<div class="t " style="left:505px;top:188.84px;font-size:12px;line-height:12px;color:#2a89d6;letter-spacing:-0.4px;">In Process</div>
<div class="t " style="left:605px;top:188.84px;font-size:12px;line-height:12px;color:#6a6a6a;letter-spacing:-0.25px;">Walk In</div>
<div class="t " style="left:705px;top:188.84px;font-size:12px;line-height:12px;color:#262626;letter-spacing:-0.8px;">$10.89</div>
<div class="t " style="left:805px;top:188.84px;font-size:12px;line-height:12px;color:#262626;letter-spacing:-0.8px;">$10.89</div>
<div class="t " style="left:1005px;top:188.84px;font-size:12px;line-height:12px;color:#262626;letter-spacing:-0.8px;">$0.00</div>
<div class="t " style="left:1205px;top:188.84px;font-size:12px;line-height:12px;color:#262626;letter-spacing:-0.25px;">test</div>
<div class="r" style="left:6px;top:211px;width:14px;height:14px;background:none;border:2px solid #0b5d9c;border-radius:2px;"></div>
<div class="t " style="left:35px;top:213.84px;font-size:12px;line-height:12px;color:#262626;letter-spacing:-0.3px;">Walk-In</div>
<div class="t " style="left:135px;top:213.84px;font-size:12px;line-height:12px;color:#262626;letter-spacing:-0.25px;">Spring Valley</div>
<div class="t " style="left:235px;top:213.84px;font-size:12px;line-height:12px;color:#262626;letter-spacing:-0.27px;">12/17/2021</div>
<div class="t " style="left:320px;top:213.84px;font-size:12px;line-height:12px;color:#262626;letter-spacing:-0.27px;">12/18/2021</div>
<div class="t " style="left:405px;top:213.84px;font-size:12px;line-height:12px;color:#1767a6;letter-spacing:-0.25px;">SO-0049526</div>
<div class="t " style="left:505px;top:213.84px;font-size:12px;line-height:12px;color:#2a89d6;letter-spacing:-0.4px;">In Process</div>
<div class="t " style="left:605px;top:213.84px;font-size:12px;line-height:12px;color:#6a6a6a;letter-spacing:-0.25px;">Walk In</div>
<div class="t " style="left:705px;top:213.84px;font-size:12px;line-height:12px;color:#262626;letter-spacing:-0.8px;">$10.89</div>
<div class="t " style="left:805px;top:213.84px;font-size:12px;line-height:12px;color:#262626;letter-spacing:-0.8px;">$10.89</div>
<div class="t " style="left:1005px;top:213.84px;font-size:12px;line-height:12px;color:#262626;letter-spacing:-0.8px;">$0.00</div>
<div class="t " style="left:1205px;top:213.84px;font-size:12px;line-height:12px;color:#262626;letter-spacing:-0.25px;">test</div>
<div class="r" style="left:6px;top:236px;width:14px;height:14px;background:none;border:2px solid #0b5d9c;border-radius:2px;"></div>
<div class="t " style="left:35px;top:238.84px;font-size:12px;line-height:12px;color:#262626;letter-spacing:-0.3px;">Walk-In</div>
<div class="t " style="left:135px;top:238.84px;font-size:12px;line-height:12px;color:#262626;letter-spacing:-0.25px;">Spring Valley</div>
<div class="t " style="left:235px;top:238.84px;font-size:12px;line-height:12px;color:#262626;letter-spacing:-0.27px;">12/17/2021</div>
<div class="t " style="left:320px;top:238.84px;font-size:12px;line-height:12px;color:#262626;letter-spacing:-0.27px;">12/18/2021</div>
<div class="t " style="left:405px;top:238.84px;font-size:12px;line-height:12px;color:#1767a6;letter-spacing:-0.25px;">SO-0049524</div>
<div class="t " style="left:505px;top:238.84px;font-size:12px;line-height:12px;color:#4bab45;letter-spacing:-0.4px;">Shipped</div>
<div class="t " style="left:705px;top:238.84px;font-size:12px;line-height:12px;color:#262626;letter-spacing:-0.8px;">$21.78</div>
<div class="t " style="left:805px;top:238.84px;font-size:12px;line-height:12px;color:#262626;letter-spacing:-0.8px;">$21.78</div>
<div class="t " style="left:1005px;top:238.84px;font-size:12px;line-height:12px;color:#262626;letter-spacing:-0.8px;">$0.00</div>
<div class="t " style="left:1205px;top:238.84px;font-size:12px;line-height:12px;color:#262626;letter-spacing:-0.25px;">test</div>
<div class="r" style="left:6px;top:261px;width:14px;height:14px;background:none;border:2px solid #0b5d9c;border-radius:2px;"></div>
<div class="t " style="left:35px;top:263.84px;font-size:12px;line-height:12px;color:#262626;letter-spacing:-0.3px;">00000qqq</div>
<div class="t " style="left:135px;top:263.84px;font-size:12px;line-height:12px;color:#262626;letter-spacing:-0.25px;">Spring Valley</div>
<div class="t " style="left:235px;top:263.84px;font-size:12px;line-height:12px;color:#262626;letter-spacing:-0.27px;">12/16/2021</div>
<div class="t " style="left:405px;top:263.84px;font-size:12px;line-height:12px;color:#1767a6;letter-spacing:-0.25px;">SO-0049511</div>
<div class="t " style="left:505px;top:263.84px;font-size:12px;line-height:12px;color:#f0841c;letter-spacing:-0.4px;">Partial Shipped</div>
<div class="t " style="left:705px;top:263.84px;font-size:12px;line-height:12px;color:#262626;letter-spacing:-0.8px;">$10.00</div>
<div class="t " style="left:805px;top:263.84px;font-size:12px;line-height:12px;color:#262626;letter-spacing:-0.8px;">$6.50</div>
<div class="t " style="left:905px;top:263.84px;font-size:12px;line-height:12px;color:#262626;letter-spacing:-0.25px;">11</div>
<div class="t " style="left:1005px;top:263.84px;font-size:12px;line-height:12px;color:#262626;letter-spacing:-0.8px;">$3.50</div>
<div class="t " style="left:1205px;top:263.84px;font-size:12px;line-height:12px;color:#262626;letter-spacing:-0.25px;">test</div>
<div class="r" style="left:6px;top:286px;width:14px;height:14px;background:none;border:2px solid #0b5d9c;border-radius:2px;"></div>
<div class="t " style="left:35px;top:288.84px;font-size:12px;line-height:12px;color:#262626;letter-spacing:-0.3px;">00001</div>
<div class="t " style="left:135px;top:288.84px;font-size:12px;line-height:12px;color:#262626;letter-spacing:-0.25px;">Spring Valley</div>
<div class="t " style="left:235px;top:288.84px;font-size:12px;line-height:12px;color:#262626;letter-spacing:-0.27px;">12/16/2021</div>
<div class="t " style="left:405px;top:288.84px;font-size:12px;line-height:12px;color:#1767a6;letter-spacing:-0.25px;">SO-0049510</div>
<div class="t " style="left:505px;top:288.84px;font-size:12px;line-height:12px;color:#4bab45;letter-spacing:-0.4px;">Shipped</div>
<div class="t " style="left:705px;top:288.84px;font-size:12px;line-height:12px;color:#262626;letter-spacing:-0.8px;">$10.89</div>
<div class="t " style="left:805px;top:288.84px;font-size:12px;line-height:12px;color:#262626;letter-spacing:-0.8px;">$9.80</div>
<div class="t " style="left:905px;top:288.84px;font-size:12px;line-height:12px;color:#262626;letter-spacing:-0.25px;">Consigment</div>
<div class="t " style="left:1005px;top:288.84px;font-size:12px;line-height:12px;color:#262626;letter-spacing:-0.8px;">$1.09</div>
<div class="t " style="left:1205px;top:288.84px;font-size:12px;line-height:12px;color:#262626;letter-spacing:-0.25px;">test</div>
<div class="r" style="left:6px;top:311px;width:14px;height:14px;background:none;border:2px solid #0b5d9c;border-radius:2px;"></div>
<div class="t " style="left:35px;top:313.84px;font-size:12px;line-height:12px;color:#262626;letter-spacing:-0.3px;">00000qqq</div>
<div class="t " style="left:135px;top:313.84px;font-size:12px;line-height:12px;color:#262626;letter-spacing:-0.25px;">Spring Valley</div>
<div class="t " style="left:235px;top:313.84px;font-size:12px;line-height:12px;color:#262626;letter-spacing:-0.27px;">12/16/2021</div>
<div class="t " style="left:405px;top:313.84px;font-size:12px;line-height:12px;color:#1767a6;letter-spacing:-0.25px;">SO-0049508</div>
<div class="t " style="left:505px;top:313.84px;font-size:12px;line-height:12px;color:#4bab45;letter-spacing:-0.4px;">Shipped</div>
<div class="t " style="left:605px;top:313.84px;font-size:12px;line-height:12px;color:#6a6a6a;letter-spacing:-0.25px;">Not Reserved</div>
<div class="t " style="left:705px;top:313.84px;font-size:12px;line-height:12px;color:#262626;letter-spacing:-0.8px;">$43.55</div>
<div class="t " style="left:805px;top:313.84px;font-size:12px;line-height:12px;color:#262626;letter-spacing:-0.8px;">$8.71</div>
<div class="t " style="left:905px;top:313.84px;font-size:12px;line-height:12px;color:#262626;letter-spacing:-0.25px;">11</div>
<div class="t " style="left:1005px;top:313.84px;font-size:12px;line-height:12px;color:#262626;letter-spacing:-0.8px;">$34.84</div>
<div class="t " style="left:1205px;top:313.84px;font-size:12px;line-height:12px;color:#262626;letter-spacing:-0.25px;">test</div>
<div class="t " style="left:1505px;top:313.84px;font-size:12px;line-height:12px;color:#262626;letter-spacing:-0.25px;">90</div>
<div class="r" style="left:6px;top:336px;width:14px;height:14px;background:none;border:2px solid #0b5d9c;border-radius:2px;"></div>
<div class="t " style="left:35px;top:338.84px;font-size:12px;line-height:12px;color:#262626;letter-spacing:-0.3px;">739 Park Ave</div>
<div class="t " style="left:135px;top:338.84px;font-size:12px;line-height:12px;color:#262626;letter-spacing:-0.25px;">Spring Valley</div>
<div class="t " style="left:235px;top:338.84px;font-size:12px;line-height:12px;color:#262626;letter-spacing:-0.27px;">12/16/2021</div>
<div class="t " style="left:320px;top:338.84px;font-size:12px;line-height:12px;color:#262626;letter-spacing:-0.27px;">12/16/2021</div>
<div class="t " style="left:405px;top:338.84px;font-size:12px;line-height:12px;color:#1767a6;letter-spacing:-0.25px;">SO-0049506</div>
<div class="t " style="left:505px;top:338.84px;font-size:12px;line-height:12px;color:#2a89d6;letter-spacing:-0.4px;">Ready To Ship</div>
<div class="t " style="left:705px;top:338.84px;font-size:12px;line-height:12px;color:#262626;letter-spacing:-0.8px;">$217.75</div>
<div class="t " style="left:805px;top:338.84px;font-size:12px;line-height:12px;color:#262626;letter-spacing:-0.8px;">$0.00</div>
<div class="t " style="left:1005px;top:338.84px;font-size:12px;line-height:12px;color:#262626;letter-spacing:-0.8px;">$217.75</div>
<div class="t " style="left:1105px;top:338.84px;font-size:12px;line-height:12px;color:#262626;letter-spacing:-0.25px;">New Jersey</div>
<div class="t " style="left:1205px;top:338.84px;font-size:12px;line-height:12px;color:#262626;letter-spacing:-0.25px;">test</div>
<div class="r" style="left:6px;top:361px;width:14px;height:14px;background:none;border:2px solid #0b5d9c;border-radius:2px;"></div>
<div class="t " style="left:35px;top:363.84px;font-size:12px;line-height:12px;color:#262626;letter-spacing:-0.3px;">00000qqq</div>
<div class="t " style="left:135px;top:363.84px;font-size:12px;line-height:12px;color:#262626;letter-spacing:-0.25px;">Spring Valley</div>
<div class="t " style="left:235px;top:363.84px;font-size:12px;line-height:12px;color:#262626;letter-spacing:-0.27px;">12/16/2021</div>
<div class="t " style="left:320px;top:363.84px;font-size:12px;line-height:12px;color:#262626;letter-spacing:-0.27px;">12/16/2021</div>
<div class="t " style="left:405px;top:363.84px;font-size:12px;line-height:12px;color:#1767a6;letter-spacing:-0.25px;">SO-0049505</div>
<div class="t " style="left:505px;top:363.84px;font-size:12px;line-height:12px;color:#2a89d6;letter-spacing:-0.4px;">Ready To Ship</div>
<div class="t " style="left:705px;top:363.84px;font-size:12px;line-height:12px;color:#262626;letter-spacing:-0.8px;">$1,117.06</div>
<div class="t " style="left:805px;top:363.84px;font-size:12px;line-height:12px;color:#262626;letter-spacing:-0.8px;">$0.00</div>
<div class="t " style="left:905px;top:363.84px;font-size:12px;line-height:12px;color:#262626;letter-spacing:-0.25px;">30/70</div>
<div class="t " style="left:1005px;top:363.84px;font-size:12px;line-height:12px;color:#262626;letter-spacing:-0.8px;">$1,117.06</div>
<div class="t " style="left:1205px;top:363.84px;font-size:12px;line-height:12px;color:#262626;letter-spacing:-0.25px;">test</div>
<div class="t " style="left:1505px;top:363.84px;font-size:12px;line-height:12px;color:#262626;letter-spacing:-0.25px;">90</div>
<div class="r" style="left:6px;top:386px;width:14px;height:14px;background:none;border:2px solid #0b5d9c;border-radius:2px;"></div>
<div class="t " style="left:35px;top:388.84px;font-size:12px;line-height:12px;color:#262626;letter-spacing:-0.3px;">Karinatest</div>
<div class="t " style="left:135px;top:388.84px;font-size:12px;line-height:12px;color:#262626;letter-spacing:-0.25px;">Spring Valley</div>
<div class="t " style="left:235px;top:388.84px;font-size:12px;line-height:12px;color:#262626;letter-spacing:-0.27px;">12/16/2021</div>
<div class="t " style="left:405px;top:388.84px;font-size:12px;line-height:12px;color:#1767a6;letter-spacing:-0.25px;">SO-0049504</div>
<div class="t " style="left:505px;top:388.84px;font-size:12px;line-height:12px;color:#f0841c;letter-spacing:-0.4px;">Partial Shipped</div>
<div class="t " style="left:705px;top:388.84px;font-size:12px;line-height:12px;color:#262626;letter-spacing:-0.8px;">$821.10</div>
<div class="t " style="left:805px;top:388.84px;font-size:12px;line-height:12px;color:#262626;letter-spacing:-0.8px;">$0.00</div>
<div class="t " style="left:905px;top:388.84px;font-size:12px;line-height:12px;color:#262626;letter-spacing:-0.25px;">net 15</div>
<div class="t " style="left:1005px;top:388.84px;font-size:12px;line-height:12px;color:#262626;letter-spacing:-0.8px;">$821.10</div>
<div class="t " style="left:1105px;top:388.84px;font-size:12px;line-height:12px;color:#262626;letter-spacing:-0.25px;">New Jersey</div>
<div class="t " style="left:1205px;top:388.84px;font-size:12px;line-height:12px;color:#262626;letter-spacing:-0.25px;">test</div>
<div class="t " style="left:1505px;top:388.84px;font-size:12px;line-height:12px;color:#1767a6;letter-spacing:-0.6px;">3 CATEGORIES</div>
<div class="r" style="left:6px;top:411px;width:14px;height:14px;background:none;border:2px solid #0b5d9c;border-radius:2px;"></div>
<div class="t " style="left:35px;top:413.84px;font-size:12px;line-height:12px;color:#262626;letter-spacing:-0.3px;">Walk-In</div>
<div class="t " style="left:135px;top:413.84px;font-size:12px;line-height:12px;color:#262626;letter-spacing:-0.25px;">Spring Valley</div>
<div class="t " style="left:235px;top:413.84px;font-size:12px;line-height:12px;color:#262626;letter-spacing:-0.27px;">12/16/2021</div>
<div class="t " style="left:320px;top:413.84px;font-size:12px;line-height:12px;color:#262626;letter-spacing:-0.27px;">12/17/2021</div>
<div class="t " style="left:405px;top:413.84px;font-size:12px;line-height:12px;color:#1767a6;letter-spacing:-0.25px;">SO-0049498</div>
<div class="t " style="left:505px;top:413.84px;font-size:12px;line-height:12px;color:#4bab45;letter-spacing:-0.4px;">Shipped</div>
<div class="t " style="left:705px;top:413.84px;font-size:12px;line-height:12px;color:#262626;letter-spacing:-0.8px;">$140.01</div>
<div class="t " style="left:805px;top:413.84px;font-size:12px;line-height:12px;color:#262626;letter-spacing:-0.8px;">$140.01</div>
<div class="t " style="left:1005px;top:413.84px;font-size:12px;line-height:12px;color:#262626;letter-spacing:-0.8px;">$0.00</div>
<div class="t " style="left:1205px;top:413.84px;font-size:12px;line-height:12px;color:#262626;letter-spacing:-0.25px;">test</div>
<div class="r" style="left:6px;top:436px;width:14px;height:14px;background:none;border:2px solid #0b5d9c;border-radius:2px;"></div>
<div class="t " style="left:35px;top:438.84px;font-size:12px;line-height:12px;color:#262626;letter-spacing:-0.3px;">Walk-In</div>
<div class="t " style="left:135px;top:438.84px;font-size:12px;line-height:12px;color:#262626;letter-spacing:-0.25px;">Spring Valley</div>
<div class="t " style="left:235px;top:438.84px;font-size:12px;line-height:12px;color:#262626;letter-spacing:-0.27px;">12/16/2021</div>
<div class="t " style="left:320px;top:438.84px;font-size:12px;line-height:12px;color:#262626;letter-spacing:-0.27px;">12/17/2021</div>
<div class="t " style="left:405px;top:438.84px;font-size:12px;line-height:12px;color:#1767a6;letter-spacing:-0.25px;">SO-0049497</div>
<div class="t " style="left:505px;top:438.84px;font-size:12px;line-height:12px;color:#f0841c;letter-spacing:-0.4px;">Partial Shipped</div>
<div class="t " style="left:705px;top:438.84px;font-size:12px;line-height:12px;color:#262626;letter-spacing:-0.8px;">$100.00</div>
<div class="t " style="left:805px;top:438.84px;font-size:12px;line-height:12px;color:#262626;letter-spacing:-0.8px;">$50.00</div>
<div class="t " style="left:1005px;top:438.84px;font-size:12px;line-height:12px;color:#262626;letter-spacing:-0.8px;">$50.00</div>
<div class="t " style="left:1205px;top:438.84px;font-size:12px;line-height:12px;color:#262626;letter-spacing:-0.25px;">test</div>
<div class="r" style="left:6px;top:461px;width:14px;height:14px;background:none;border:2px solid #0b5d9c;border-radius:2px;"></div>
<div class="t " style="left:35px;top:463.84px;font-size:12px;line-height:12px;color:#262626;letter-spacing:-0.3px;">Walk-In</div>
<div class="t " style="left:135px;top:463.84px;font-size:12px;line-height:12px;color:#262626;letter-spacing:-0.25px;">Spring Valley</div>
<div class="t " style="left:235px;top:463.84px;font-size:12px;line-height:12px;color:#262626;letter-spacing:-0.27px;">12/16/2021</div>
<div class="t " style="left:320px;top:463.84px;font-size:12px;line-height:12px;color:#262626;letter-spacing:-0.27px;">12/17/2021</div>
<div class="t " style="left:405px;top:463.84px;font-size:12px;line-height:12px;color:#1767a6;letter-spacing:-0.25px;">SO-0049495</div>
<div class="t " style="left:505px;top:463.84px;font-size:12px;line-height:12px;color:#4bab45;letter-spacing:-0.4px;">Shipped</div>
<div class="t " style="left:705px;top:463.84px;font-size:12px;line-height:12px;color:#262626;letter-spacing:-0.8px;">$1,050.00</div>
<div class="t " style="left:805px;top:463.84px;font-size:12px;line-height:12px;color:#262626;letter-spacing:-0.8px;">$1,050.00</div>
<div class="t " style="left:1005px;top:463.84px;font-size:12px;line-height:12px;color:#262626;letter-spacing:-0.8px;">$0.00</div>
<div class="t " style="left:1205px;top:463.84px;font-size:12px;line-height:12px;color:#262626;letter-spacing:-0.25px;">test</div>
<div class="r" style="left:6px;top:486px;width:14px;height:14px;background:none;border:2px solid #0b5d9c;border-radius:2px;"></div>
<div class="t " style="left:35px;top:488.84px;font-size:12px;line-height:12px;color:#262626;letter-spacing:-0.3px;">739 Park Ave</div>
<div class="t " style="left:135px;top:488.84px;font-size:12px;line-height:12px;color:#262626;letter-spacing:-0.25px;">Spring Valley</div>
<div class="t " style="left:235px;top:488.84px;font-size:12px;line-height:12px;color:#262626;letter-spacing:-0.27px;">12/16/2021</div>
<div class="t " style="left:320px;top:488.84px;font-size:12px;line-height:12px;color:#262626;letter-spacing:-0.27px;">12/17/2021</div>
<div class="t " style="left:405px;top:488.84px;font-size:12px;line-height:12px;color:#1767a6;letter-spacing:-0.25px;">SO-0049493</div>
<div class="t " style="left:505px;top:488.84px;font-size:12px;line-height:12px;color:#4bab45;letter-spacing:-0.4px;">Shipped</div>
<div class="t " style="left:705px;top:488.84px;font-size:12px;line-height:12px;color:#262626;letter-spacing:-0.8px;">$12.00</div>
<div class="t " style="left:805px;top:488.84px;font-size:12px;line-height:12px;color:#262626;letter-spacing:-0.8px;">$0.00</div>
<div class="t " style="left:1005px;top:488.84px;font-size:12px;line-height:12px;color:#262626;letter-spacing:-0.8px;">$12.00</div>
<div class="t " style="left:1105px;top:488.84px;font-size:12px;line-height:12px;color:#262626;letter-spacing:-0.25px;">New Jersey</div>
<div class="t " style="left:1205px;top:488.84px;font-size:12px;line-height:12px;color:#262626;letter-spacing:-0.25px;">test</div>
<div class="r" style="left:6px;top:511px;width:14px;height:14px;background:none;border:2px solid #0b5d9c;border-radius:2px;"></div>
<div class="t " style="left:35px;top:513.84px;font-size:12px;line-height:12px;color:#262626;letter-spacing:-0.3px;">00000qqq</div>
<div class="t " style="left:135px;top:513.84px;font-size:12px;line-height:12px;color:#262626;letter-spacing:-0.25px;">Spring Valley</div>
<div class="t " style="left:235px;top:513.84px;font-size:12px;line-height:12px;color:#262626;letter-spacing:-0.27px;">12/16/2021</div>
<div class="t " style="left:320px;top:513.84px;font-size:12px;line-height:12px;color:#262626;letter-spacing:-0.27px;">12/17/2021</div>
<div class="t " style="left:405px;top:513.84px;font-size:12px;line-height:12px;color:#1767a6;letter-spacing:-0.25px;">SO-0049492</div>
<div class="t " style="left:505px;top:513.84px;font-size:12px;line-height:12px;color:#2a89d6;letter-spacing:-0.4px;">In Process</div>
<div class="t " style="left:605px;top:513.84px;font-size:12px;line-height:12px;color:#6a6a6a;letter-spacing:-0.25px;">Not Reserved</div>
<div class="t " style="left:705px;top:513.84px;font-size:12px;line-height:12px;color:#262626;letter-spacing:-0.8px;">$144.00</div>
<div class="t " style="left:805px;top:513.84px;font-size:12px;line-height:12px;color:#262626;letter-spacing:-0.8px;">$0.00</div>
<div class="t " style="left:1005px;top:513.84px;font-size:12px;line-height:12px;color:#262626;letter-spacing:-0.8px;">$144.00</div>
<div class="t " style="left:1205px;top:513.84px;font-size:12px;line-height:12px;color:#262626;letter-spacing:-0.25px;">test</div>
<div class="r" style="left:6px;top:536px;width:14px;height:14px;background:none;border:2px solid #0b5d9c;border-radius:2px;"></div>
<div class="t " style="left:35px;top:538.84px;font-size:12px;line-height:12px;color:#262626;letter-spacing:-0.3px;">739 Park Ave</div>
<div class="t " style="left:135px;top:538.84px;font-size:12px;line-height:12px;color:#262626;letter-spacing:-0.25px;">Spring Valley</div>
<div class="t " style="left:235px;top:538.84px;font-size:12px;line-height:12px;color:#262626;letter-spacing:-0.27px;">12/16/2021</div>
<div class="t " style="left:320px;top:538.84px;font-size:12px;line-height:12px;color:#262626;letter-spacing:-0.27px;">12/17/2021</div>
<div class="t " style="left:405px;top:538.84px;font-size:12px;line-height:12px;color:#1767a6;letter-spacing:-0.25px;">SO-0049490</div>
<div class="t " style="left:505px;top:538.84px;font-size:12px;line-height:12px;color:#4bab45;letter-spacing:-0.4px;">Shipped</div>
<div class="t " style="left:705px;top:538.84px;font-size:12px;line-height:12px;color:#262626;letter-spacing:-0.8px;">$5.00</div>
<div class="t " style="left:805px;top:538.84px;font-size:12px;line-height:12px;color:#262626;letter-spacing:-0.8px;">$5.00</div>
<div class="t " style="left:1005px;top:538.84px;font-size:12px;line-height:12px;color:#262626;letter-spacing:-0.8px;">$0.00</div>
<div class="t " style="left:1205px;top:538.84px;font-size:12px;line-height:12px;color:#262626;letter-spacing:-0.25px;">test</div>
<div class="r" style="left:6px;top:561px;width:14px;height:14px;background:none;border:2px solid #0b5d9c;border-radius:2px;"></div>
<div class="t " style="left:35px;top:563.84px;font-size:12px;line-height:12px;color:#262626;letter-spacing:-0.3px;">Walk-In</div>
<div class="t " style="left:135px;top:563.84px;font-size:12px;line-height:12px;color:#262626;letter-spacing:-0.25px;">Spring Valley</div>
<div class="t " style="left:235px;top:563.84px;font-size:12px;line-height:12px;color:#262626;letter-spacing:-0.27px;">12/16/2021</div>
<div class="t " style="left:320px;top:563.84px;font-size:12px;line-height:12px;color:#262626;letter-spacing:-0.27px;">12/17/2021</div>
<div class="t " style="left:405px;top:563.84px;font-size:12px;line-height:12px;color:#1767a6;letter-spacing:-0.25px;">SO-0049488</div>
<div class="t " style="left:505px;top:563.84px;font-size:12px;line-height:12px;color:#2a89d6;letter-spacing:-0.4px;">In Process</div>
<div class="t " style="left:605px;top:563.84px;font-size:12px;line-height:12px;color:#6a6a6a;letter-spacing:-0.25px;">Walk In</div>
<div class="t " style="left:705px;top:563.84px;font-size:12px;line-height:12px;color:#262626;letter-spacing:-0.8px;">$5.44</div>
<div class="t " style="left:805px;top:563.84px;font-size:12px;line-height:12px;color:#262626;letter-spacing:-0.8px;">$5.44</div>
<div class="t " style="left:1005px;top:563.84px;font-size:12px;line-height:12px;color:#262626;letter-spacing:-0.8px;">$0.00</div>
<div class="t " style="left:1205px;top:563.84px;font-size:12px;line-height:12px;color:#262626;letter-spacing:-0.25px;">test</div>
<div class="r" style="left:6px;top:586px;width:14px;height:14px;background:none;border:2px solid #0b5d9c;border-radius:2px;"></div>
<div class="t " style="left:35px;top:588.84px;font-size:12px;line-height:12px;color:#262626;letter-spacing:-0.3px;">Walk-In</div>
<div class="t " style="left:135px;top:588.84px;font-size:12px;line-height:12px;color:#262626;letter-spacing:-0.25px;">Spring Valley</div>
<div class="t " style="left:235px;top:588.84px;font-size:12px;line-height:12px;color:#262626;letter-spacing:-0.27px;">12/16/2021</div>
<div class="t " style="left:320px;top:588.84px;font-size:12px;line-height:12px;color:#262626;letter-spacing:-0.27px;">12/17/2021</div>
<div class="t " style="left:405px;top:588.84px;font-size:12px;line-height:12px;color:#1767a6;letter-spacing:-0.25px;">SO-0049487</div>
<div class="t " style="left:505px;top:588.84px;font-size:12px;line-height:12px;color:#4bab45;letter-spacing:-0.4px;">Shipped</div>
<div class="t " style="left:705px;top:588.84px;font-size:12px;line-height:12px;color:#262626;letter-spacing:-0.8px;">$5.44</div>
<div class="t " style="left:805px;top:588.84px;font-size:12px;line-height:12px;color:#262626;letter-spacing:-0.8px;">$5.44</div>
<div class="t " style="left:1005px;top:588.84px;font-size:12px;line-height:12px;color:#262626;letter-spacing:-0.8px;">$0.00</div>
<div class="t " style="left:1205px;top:588.84px;font-size:12px;line-height:12px;color:#262626;letter-spacing:-0.25px;">test</div>
<div class="r" style="left:6px;top:611px;width:14px;height:14px;background:none;border:2px solid #0b5d9c;border-radius:2px;"></div>
<div class="t " style="left:35px;top:613.84px;font-size:12px;line-height:12px;color:#262626;letter-spacing:-0.3px;">Walk-In</div>
<div class="t " style="left:135px;top:613.84px;font-size:12px;line-height:12px;color:#262626;letter-spacing:-0.25px;">Spring Valley</div>
<div class="t " style="left:235px;top:613.84px;font-size:12px;line-height:12px;color:#262626;letter-spacing:-0.27px;">12/16/2021</div>
<div class="t " style="left:320px;top:613.84px;font-size:12px;line-height:12px;color:#262626;letter-spacing:-0.27px;">12/10/2021</div>
<div class="t " style="left:405px;top:613.84px;font-size:12px;line-height:12px;color:#1767a6;letter-spacing:-0.25px;">SO-0049311</div>
<div class="t " style="left:505px;top:613.84px;font-size:12px;line-height:12px;color:#4bab45;letter-spacing:-0.4px;">Shipped</div>
<div class="t " style="left:705px;top:613.84px;font-size:12px;line-height:12px;color:#262626;letter-spacing:-0.8px;">$5.00</div>
<div class="t " style="left:805px;top:613.84px;font-size:12px;line-height:12px;color:#262626;letter-spacing:-0.8px;">$5.00</div>
<div class="t " style="left:1005px;top:613.84px;font-size:12px;line-height:12px;color:#262626;letter-spacing:-0.8px;">$0.00</div>
<div class="t " style="left:1205px;top:613.84px;font-size:12px;line-height:12px;color:#262626;letter-spacing:-0.25px;">test</div>
<div class="r" style="left:6px;top:636px;width:14px;height:14px;background:none;border:2px solid #0b5d9c;border-radius:2px;"></div>
<div class="t " style="left:35px;top:638.84px;font-size:12px;line-height:12px;color:#262626;letter-spacing:-0.3px;">Walk-In</div>
<div class="t " style="left:135px;top:638.84px;font-size:12px;line-height:12px;color:#262626;letter-spacing:-0.25px;">Spring Valley</div>
<div class="t " style="left:235px;top:638.84px;font-size:12px;line-height:12px;color:#262626;letter-spacing:-0.27px;">12/16/2021</div>
<div class="t " style="left:320px;top:638.84px;font-size:12px;line-height:12px;color:#262626;letter-spacing:-0.27px;">12/17/2021</div>
<div class="t " style="left:405px;top:638.84px;font-size:12px;line-height:12px;color:#1767a6;letter-spacing:-0.25px;">SO-0049481</div>
<div class="t " style="left:505px;top:638.84px;font-size:12px;line-height:12px;color:#4bab45;letter-spacing:-0.4px;">Shipped</div>
<div class="t " style="left:705px;top:638.84px;font-size:12px;line-height:12px;color:#262626;letter-spacing:-0.8px;">$10.00</div>
<div class="t " style="left:805px;top:638.84px;font-size:12px;line-height:12px;color:#262626;letter-spacing:-0.8px;">$10.00</div>
<div class="t " style="left:1005px;top:638.84px;font-size:12px;line-height:12px;color:#262626;letter-spacing:-0.8px;">$0.00</div>
<div class="t " style="left:1205px;top:638.84px;font-size:12px;line-height:12px;color:#262626;letter-spacing:-0.25px;">test</div>
<div class="r" style="left:6px;top:661px;width:14px;height:14px;background:none;border:2px solid #0b5d9c;border-radius:2px;"></div>
<div class="t " style="left:35px;top:663.84px;font-size:12px;line-height:12px;color:#262626;letter-spacing:-0.3px;">Walk-In</div>
<div class="t " style="left:135px;top:663.84px;font-size:12px;line-height:12px;color:#262626;letter-spacing:-0.25px;">Spring Valley</div>
<div class="t " style="left:235px;top:663.84px;font-size:12px;line-height:12px;color:#262626;letter-spacing:-0.27px;">12/15/2021</div>
<div class="t " style="left:320px;top:663.84px;font-size:12px;line-height:12px;color:#262626;letter-spacing:-0.27px;">12/16/2021</div>
<div class="t " style="left:405px;top:663.84px;font-size:12px;line-height:12px;color:#1767a6;letter-spacing:-0.25px;">SO-0049455</div>
<div class="t " style="left:505px;top:663.84px;font-size:12px;line-height:12px;color:#4bab45;letter-spacing:-0.4px;">Shipped</div>
<div class="t " style="left:705px;top:663.84px;font-size:12px;line-height:12px;color:#262626;letter-spacing:-0.8px;">$10.00</div>
<div class="t " style="left:805px;top:663.84px;font-size:12px;line-height:12px;color:#262626;letter-spacing:-0.8px;">$10.00</div>
<div class="t " style="left:1005px;top:663.84px;font-size:12px;line-height:12px;color:#262626;letter-spacing:-0.8px;">$0.00</div>
<div class="t " style="left:1205px;top:663.84px;font-size:12px;line-height:12px;color:#262626;letter-spacing:-0.25px;">test</div>
<div class="r" style="left:6px;top:686px;width:14px;height:14px;background:none;border:2px solid #0b5d9c;border-radius:2px;"></div>
<div class="t " style="left:35px;top:688.84px;font-size:12px;line-height:12px;color:#262626;letter-spacing:-0.3px;">Walk-In</div>
<div class="t " style="left:135px;top:688.84px;font-size:12px;line-height:12px;color:#262626;letter-spacing:-0.25px;">Spring Valley</div>
<div class="t " style="left:235px;top:688.84px;font-size:12px;line-height:12px;color:#262626;letter-spacing:-0.27px;">12/15/2021</div>
<div class="t " style="left:320px;top:688.84px;font-size:12px;line-height:12px;color:#262626;letter-spacing:-0.27px;">12/16/2021</div>
<div class="t " style="left:405px;top:688.84px;font-size:12px;line-height:12px;color:#1767a6;letter-spacing:-0.25px;">SO-0049454</div>
<div class="t " style="left:505px;top:688.84px;font-size:12px;line-height:12px;color:#4bab45;letter-spacing:-0.4px;">Shipped</div>
<div class="t " style="left:705px;top:688.84px;font-size:12px;line-height:12px;color:#262626;letter-spacing:-0.8px;">$10.00</div>
<div class="t " style="left:805px;top:688.84px;font-size:12px;line-height:12px;color:#262626;letter-spacing:-0.8px;">$10.00</div>
<div class="t " style="left:1005px;top:688.84px;font-size:12px;line-height:12px;color:#262626;letter-spacing:-0.8px;">$0.00</div>
<div class="t " style="left:1205px;top:688.84px;font-size:12px;line-height:12px;color:#262626;letter-spacing:-0.25px;">test</div>
<div class="r" style="left:6px;top:711px;width:14px;height:14px;background:none;border:2px solid #0b5d9c;border-radius:2px;"></div>
<div class="t " style="left:35px;top:713.84px;font-size:12px;line-height:12px;color:#262626;letter-spacing:-0.3px;">739 Park Ave</div>
<div class="t " style="left:135px;top:713.84px;font-size:12px;line-height:12px;color:#262626;letter-spacing:-0.25px;">Spring Valley</div>
<div class="t " style="left:235px;top:713.84px;font-size:12px;line-height:12px;color:#262626;letter-spacing:-0.27px;">12/15/2021</div>
<div class="t " style="left:320px;top:713.84px;font-size:12px;line-height:12px;color:#262626;letter-spacing:-0.27px;">12/16/2021</div>
<div class="t " style="left:405px;top:713.84px;font-size:12px;line-height:12px;color:#1767a6;letter-spacing:-0.25px;">SO-0049453</div>
<div class="t " style="left:505px;top:713.84px;font-size:12px;line-height:12px;color:#4bab45;letter-spacing:-0.4px;">Shipped</div>
<div class="t " style="left:705px;top:713.84px;font-size:12px;line-height:12px;color:#262626;letter-spacing:-0.8px;">$10.89</div>
<div class="t " style="left:805px;top:713.84px;font-size:12px;line-height:12px;color:#262626;letter-spacing:-0.8px;">$10.89</div>
<div class="t " style="left:1005px;top:713.84px;font-size:12px;line-height:12px;color:#262626;letter-spacing:-0.8px;">$0.00</div>
<div class="t " style="left:1205px;top:713.84px;font-size:12px;line-height:12px;color:#262626;letter-spacing:-0.25px;">test</div>
<div class="r" style="left:6px;top:736px;width:14px;height:14px;background:none;border:2px solid #0b5d9c;border-radius:2px;"></div>
<div class="t " style="left:35px;top:738.84px;font-size:12px;line-height:12px;color:#262626;letter-spacing:-0.3px;">739 Park Ave</div>
<div class="t " style="left:135px;top:738.84px;font-size:12px;line-height:12px;color:#262626;letter-spacing:-0.25px;">Spring Valley</div>
<div class="t " style="left:235px;top:738.84px;font-size:12px;line-height:12px;color:#262626;letter-spacing:-0.27px;">12/15/2021</div>
<div class="t " style="left:320px;top:738.84px;font-size:12px;line-height:12px;color:#262626;letter-spacing:-0.27px;">12/16/2021</div>
<div class="t " style="left:405px;top:738.84px;font-size:12px;line-height:12px;color:#1767a6;letter-spacing:-0.25px;">SO-0049450</div>
<div class="t " style="left:505px;top:738.84px;font-size:12px;line-height:12px;color:#4bab45;letter-spacing:-0.4px;">Shipped</div>
<div class="t " style="left:705px;top:738.84px;font-size:12px;line-height:12px;color:#262626;letter-spacing:-0.8px;">$9.90</div>
<div class="t " style="left:805px;top:738.84px;font-size:12px;line-height:12px;color:#262626;letter-spacing:-0.8px;">$9.90</div>
<div class="t " style="left:1005px;top:738.84px;font-size:12px;line-height:12px;color:#262626;letter-spacing:-0.8px;">$0.00</div>
<div class="t " style="left:1205px;top:738.84px;font-size:12px;line-height:12px;color:#262626;letter-spacing:-0.25px;">test</div>
<div class="r" style="left:6px;top:761px;width:14px;height:14px;background:none;border:2px solid #0b5d9c;border-radius:2px;"></div>
<div class="t " style="left:35px;top:763.84px;font-size:12px;line-height:12px;color:#262626;letter-spacing:-0.3px;">00000qqq</div>
<div class="t " style="left:135px;top:763.84px;font-size:12px;line-height:12px;color:#262626;letter-spacing:-0.25px;">Spring Valley</div>
<div class="t " style="left:235px;top:763.84px;font-size:12px;line-height:12px;color:#262626;letter-spacing:-0.27px;">12/15/2021</div>
<div class="t " style="left:320px;top:763.84px;font-size:12px;line-height:12px;color:#262626;letter-spacing:-0.27px;">12/12/2021</div>
<div class="t " style="left:405px;top:763.84px;font-size:12px;line-height:12px;color:#1767a6;letter-spacing:-0.25px;">SO-0049446</div>
<div class="t " style="left:505px;top:763.84px;font-size:12px;line-height:12px;color:#2a89d6;letter-spacing:-0.4px;">Ready To Ship</div>
<div class="t " style="left:705px;top:763.84px;font-size:12px;line-height:12px;color:#262626;letter-spacing:-0.8px;">$54.44</div>
<div class="t " style="left:805px;top:763.84px;font-size:12px;line-height:12px;color:#262626;letter-spacing:-0.8px;">$0.00</div>
<div class="t " style="left:1005px;top:763.84px;font-size:12px;line-height:12px;color:#262626;letter-spacing:-0.8px;">$54.44</div>
<div class="t " style="left:1205px;top:763.84px;font-size:12px;line-height:12px;color:#262626;letter-spacing:-0.25px;">test</div>
<div class="t " style="left:1505px;top:763.84px;font-size:12px;line-height:12px;color:#1767a6;letter-spacing:-0.6px;">2 CATEGORIES</div>
</div>
<svg class="r" style="left:1907px;top:236px" width="9" height="6" viewBox="0 0 9 6"><path d="M0.5 5.5 L4.5 1 L8.5 5.5" fill="none" stroke="#e0e0e0" stroke-width="1"/></svg>
<div class="r" style="left:1908px;top:246px;width:7px;height:417px;background:#dadada;"></div>
<svg class="r" style="left:1907px;top:971px" width="9" height="6" viewBox="0 0 9 6"><path d="M0.5 0.5 L4.5 5 L8.5 0.5" fill="none" stroke="#e0e0e0" stroke-width="1"/></svg>
<div class="r" style="left:1919px;top:199px;width:1px;height:796px;background:#dedede;"></div>
<svg class="r" style="left:289px;top:982px" width="6" height="9" viewBox="0 0 6 9"><path d="M5.5 0.5 L1 4.5 L5.5 8.5" fill="none" stroke="#e0e0e0" stroke-width="1"/></svg>
<div class="r" style="left:300px;top:983px;width:1513px;height:7px;background:#dcdcdc;"></div>
<svg class="r" style="left:1896px;top:982px" width="6" height="9" viewBox="0 0 6 9"><path d="M0.5 0.5 L5 4.5 L0.5 8.5" fill="none" stroke="#e0e0e0" stroke-width="1"/></svg>
<div class="r" style="left:285px;top:994px;width:1635px;height:1px;background:#dcdcdc;"></div>
<div class="t " style="left:1100.7px;top:1011.59px;font-size:12.3px;line-height:12.3px;color:#262626;letter-spacing:-0.6px;">Total Sales:</div>
<div class="t " style="left:1160.5px;top:1011.59px;font-size:12.3px;line-height:12.3px;color:#1a1a1a;font-weight:bold;letter-spacing:-0.07px;">$56,470,572.51</div>
<div class="t " style="left:1257px;top:1011.59px;font-size:12.3px;line-height:12.3px;color:#262626;letter-spacing:-0.6px;">Total Tax:</div>
<div class="t " style="left:1307.5px;top:1011.59px;font-size:12.3px;line-height:12.3px;color:#1a1a1a;font-weight:bold;letter-spacing:-0.07px;">$4,949,555.87</div>
<div class="t " style="left:1396.5px;top:1011.59px;font-size:12.3px;line-height:12.3px;color:#262626;letter-spacing:-0.6px;">Total Amount:</div>
<div class="t " style="left:1474.4px;top:1011.59px;font-size:12.3px;line-height:12.3px;color:#1a1a1a;font-weight:bold;letter-spacing:-0.07px;">$61,420,128.38</div>
<div class="t " style="left:1570.6px;top:1011.59px;font-size:12.3px;line-height:12.3px;color:#262626;letter-spacing:-0.6px;">Total Payments:</div>
<div class="t " style="left:1656px;top:1011.59px;font-size:12.3px;line-height:12.3px;color:#1a1a1a;font-weight:bold;letter-spacing:-0.07px;">$60,839,901.73</div>
<div class="t " style="left:1752px;top:1011.59px;font-size:12.3px;line-height:12.3px;color:#262626;letter-spacing:-0.6px;">Open Balance:</div>
<div class="t " style="left:1831px;top:1011.59px;font-size:12.3px;line-height:12.3px;color:#1a1a1a;font-weight:bold;letter-spacing:-0.07px;">$580,226.65</div>
</div></body></html>
